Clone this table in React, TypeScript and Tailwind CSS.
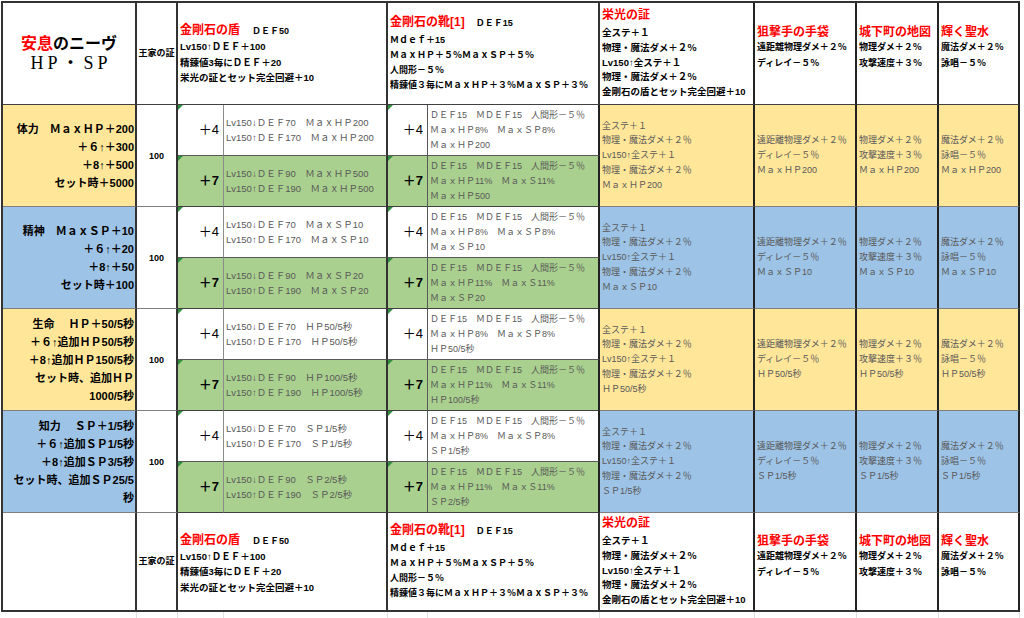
const FONT = "font-['Liberation_Sans','Noto_Sans_CJK_JP',sans-serif]";
const COLS =
  "grid-cols-[134px_41px_46px_164px_40px_172px_155px_102px_82px_81px]";

type Row = {
  bg: string;
  label: string[];
  d4: string[];
  d7: string[];
  f4: string;
  f7: string;
  last: string;
};

const ROWS: Row[] = [
  {
    bg: "bg-[#ffe699]",
    label: ["体力　ＭａｘＨＰ＋200", "＋６↑＋300", "＋8↑＋500", "セット時＋5000"],
    d4: ["Lv150↓ＤＥＦ70　ＭａｘＨＰ200", "Lv150↑ＤＥＦ170　ＭａｘＨＰ200"],
    d7: ["Lv150↓ＤＥＦ90　ＭａｘＨＰ500", "Lv150↑ＤＥＦ190　ＭａｘＨＰ500"],
    f4: "ＭａｘＨＰ200",
    f7: "ＭａｘＨＰ500",
    last: "ＭａｘＨＰ200",
  },
  {
    bg: "bg-[#9dc3e6]",
    label: ["精神　ＭａｘＳＰ＋10", "＋６↑＋20", "＋8↑＋50", "セット時＋100"],
    d4: ["Lv150↓ＤＥＦ70　ＭａｘＳＰ10", "Lv150↑ＤＥＦ170　ＭａｘＳＰ10"],
    d7: ["Lv150↓ＤＥＦ90　ＭａｘＳＰ20", "Lv150↑ＤＥＦ190　ＭａｘＳＰ20"],
    f4: "ＭａｘＳＰ10",
    f7: "ＭａｘＳＰ20",
    last: "ＭａｘＳＰ10",
  },
  {
    bg: "bg-[#ffe699]",
    label: [
      "生命　 ＨＰ＋50/5秒",
      "＋６↑追加ＨＰ50/5秒",
      "＋8↑追加ＨＰ150/5秒",
      "セット時、追加ＨＰ",
      "1000/5秒",
    ],
    d4: ["Lv150↓ＤＥＦ70　ＨＰ50/5秒", "Lv150↑ＤＥＦ170　ＨＰ50/5秒"],
    d7: ["Lv150↓ＤＥＦ90　ＨＰ100/5秒", "Lv150↑ＤＥＦ190　ＨＰ100/5秒"],
    f4: "ＨＰ50/5秒",
    f7: "ＨＰ100/5秒",
    last: "ＨＰ50/5秒",
  },
  {
    bg: "bg-[#9dc3e6]",
    label: [
      "知力　 ＳＰ＋1/5秒",
      "＋６↑追加ＳＰ1/5秒",
      "＋8↑追加ＳＰ3/5秒",
      "セット時、追加ＳＰ25/5",
      "秒",
    ],
    d4: ["Lv150↓ＤＥＦ70　ＳＰ1/5秒", "Lv150↑ＤＥＦ170　ＳＰ1/5秒"],
    d7: ["Lv150↓ＤＥＦ90　ＳＰ2/5秒", "Lv150↑ＤＥＦ190　ＳＰ2/5秒"],
    f4: "ＳＰ1/5秒",
    f7: "ＳＰ2/5秒",
    last: "ＳＰ1/5秒",
  },
];

const ITEMS = [
  { title: "狙撃手の手袋", lines: ["遠距離物理ダメ＋２％", "ディレイ－５％"] },
  { title: "城下町の地図", lines: ["物理ダメ＋２％", "攻撃速度＋３％"] },
  { title: "輝く聖水", lines: ["魔法ダメ＋２％", "詠唱－５％"] },
];

const GLORY = ["全ステ＋１", "物理・魔法ダメ＋２％", "Lv150↑全ステ＋１", "物理・魔法ダメ＋２％"];

function Marker() {
  return (
    <span className="absolute left-0 top-0 h-0 w-0 border-t-[5px] border-r-[5px] border-t-[#2f8f3f] border-r-transparent" />
  );
}

function Lines({ items }: { items: string[] }) {
  return (
    <>
      {items.map((t, i) => (
        <div key={i} className="whitespace-nowrap">
          {t}
        </div>
      ))}
    </>
  );
}

function HeaderCells({ main }: { main: boolean }) {
  const bottom = main
    ? "border-b border-b-[#404040]"
    : "border-b-2 border-b-[#333]";
  const cell = `overflow-hidden bg-white ${bottom}`;
  return (
    <>
      <div
        className={`${cell} flex flex-col items-center justify-center border-r-2 border-r-[#333]`}
      >
        {main ? (
          <>
            <div className="whitespace-nowrap text-[16px] font-bold leading-[19px] text-black">
              <span className="text-[#ff0000]">安息</span>のニーヴ
            </div>
            <div className="whitespace-nowrap pl-[4px] font-['Liberation_Serif','Noto_Sans_CJK_JP',serif] text-[18px] leading-[20px] tracking-[4px] text-black">
              HP・SP
            </div>
          </>
        ) : null}
      </div>
      <div
        className={`${cell} flex items-center justify-center border-r-2 border-r-[#333] text-[9px] font-bold text-black`}
      >
        王家の証
      </div>
      <div
        className={`${cell} col-span-2 flex flex-col justify-center border-r-2 border-r-[#333] pl-[2px] text-[9.5px] font-bold leading-[15.5px] text-black ${main ? "pt-[1px]" : "pt-[4px]"}`}
      >
        <div className="whitespace-nowrap text-[12px] leading-[16px]">
          <span className="text-[#ff0000]">金剛石の盾</span>
          <span className="ml-[12px] text-[9px]">ＤＥＦ50</span>
        </div>
        <Lines items={["Lv150↑ＤＥＦ＋100", "精錬値3毎にＤＥＦ＋20", "栄光の証とセット完全回避＋10"]} />
      </div>
      <div
        className={`${cell} col-span-2 flex flex-col justify-center border-r-2 border-r-[#333] pl-[2px] text-[9px] font-bold leading-[15px] text-black`}
      >
        <div className="mb-[1px] whitespace-nowrap text-[12px] leading-[17px]">
          <span className="text-[#ff0000]">金剛石の靴[1]</span>
          <span className="ml-[11px] text-[9px]">ＤＥＦ15</span>
        </div>
        <Lines
          items={[
            "Ｍｄｅｆ＋15",
            "ＭａｘＨＰ＋５％ＭａｘＳＰ＋５％",
            "人間形－５％",
            "精錬値３毎にＭａｘＨＰ＋３％ＭａｘＳＰ＋３％",
          ]}
        />
      </div>
      <div
        className={`${cell} flex flex-col justify-center border-r-2 border-r-[#222] pl-[2px] text-[9.5px] font-bold leading-[14.8px] text-black`}
      >
        <div className="mb-[3px] whitespace-nowrap text-[12px] leading-[16px] text-[#ff0000]">
          栄光の証
        </div>
        <Lines items={[...GLORY, "金剛石の盾とセット完全回避＋10"]} />
      </div>
      {ITEMS.map((it) => (
        <div
          key={it.title}
          className={`${cell} flex flex-col justify-center border-r-2 border-r-[#222] pl-[2px] text-[9px] font-bold leading-[15.5px] text-black ${main ? "pb-[12px]" : "pb-[10px]"}`}
        >
          <div className="whitespace-nowrap text-[12px] leading-[16px] text-[#ff0000]">
            {it.title}
          </div>
          <Lines items={it.lines} />
        </div>
      ))}
    </>
  );
}

function DataRow({ row }: { row: Row }) {
  const mid = "border-b border-b-[#595959]";
  const low = "border-b border-b-[#404040]";
  const plus = "relative flex items-center justify-end overflow-hidden text-[13px] text-black";
  const txtD = "flex flex-col justify-center overflow-hidden pl-[2px] text-[9.5px] leading-[15px] text-[#595959]";
  const txtF = "flex flex-col justify-center overflow-hidden pl-[2px] text-[9px] leading-[15px] text-[#595959]";
  const side = `row-span-2 flex flex-col justify-center overflow-hidden pl-[2px] text-[9px] leading-[14.7px] text-[#595959] border-b border-b-[#7f7f7f] border-r-2 border-r-[#222] ${row.bg}`;
  const green = "bg-[#a9d08e]";
  const fFirst = "ＤＥＦ15　ＭＤＥＦ15　人間形－５％";
  return (
    <>
      <div
        className={`row-span-2 flex flex-col items-end justify-center overflow-hidden border-b border-b-[#7f7f7f] border-r-2 border-r-[#333] pr-[1px] text-[11px] font-bold leading-[18px] text-black ${row.bg}`}
      >
        <Lines items={row.label} />
      </div>
      <div className="row-span-2 flex items-center justify-center border-b border-b-[#7f7f7f] border-r-2 border-r-[#333] bg-white pt-[2px] text-[9px] font-bold text-black">
        100
      </div>
      <div className={`${plus} ${mid} border-r border-r-[#8c8c8c] bg-white pr-[4px]`}>
        <Marker />
        ＋4
      </div>
      <div className={`${txtD} ${mid} border-r-2 border-r-[#333] bg-white`}>
        <Lines items={row.d4} />
      </div>
      <div className={`${plus} ${mid} border-r border-r-[#595959] bg-white pr-[4px]`}>
        <Marker />
        ＋4
      </div>
      <div className={`${txtF} ${mid} border-r-2 border-r-[#222] bg-white`}>
        <Lines items={[fFirst, "ＭａｘＨＰ8%　ＭａｘＳＰ8%", row.f4]} />
      </div>
      <div className={side}>
        <Lines items={[...GLORY, row.last]} />
      </div>
      <div className={side}>
        <Lines items={["遠距離物理ダメ＋２％", "ディレイ－５％", row.last]} />
      </div>
      <div className={side}>
        <Lines items={["物理ダメ＋２％", "攻撃速度＋３％", row.last]} />
      </div>
      <div className={side}>
        <Lines items={["魔法ダメ＋２％", "詠唱－５％", row.last]} />
      </div>
      <div className={`${plus} ${low} border-r border-r-[#8c8c8c] ${green} pr-[4px] font-bold`}>
        <Marker />
        ＋7
      </div>
      <div className={`${txtD} ${low} border-r-2 border-r-[#333] ${green}`}>
        <Lines items={row.d7} />
      </div>
      <div className={`${plus} ${low} border-r border-r-[#595959] ${green} pr-[4px] font-bold`}>
        <Marker />
        ＋7
      </div>
      <div className={`${txtF} ${low} border-r-2 border-r-[#222] ${green}`}>
        <Lines items={[fFirst, "ＭａｘＨＰ11%　ＭａｘＳ11%", row.f7]} />
      </div>
    </>
  );
}

export default function App() {
  return (
    <div className={`min-h-screen w-full overflow-hidden bg-white ${FONT}`}>
      <div
        className={`ml-[1px] mt-[1px] grid w-fit border-l-2 border-t-2 border-[#333] ${COLS} grid-rows-[102px_repeat(8,51px)_99px]`}
      >
        <HeaderCells main />
        {ROWS.map((r, i) => (
          <DataRow key={i} row={r} />
        ))}
        <HeaderCells main={false} />
      </div>
      <div className={`ml-[3px] grid h-[8px] w-fit ${COLS}`}>
        {Array.from({ length: 10 }).map((_, i) => (
          <div key={i} className="border-r border-r-[#e0e0e0]" />
        ))}
      </div>
    </div>
  );
}
